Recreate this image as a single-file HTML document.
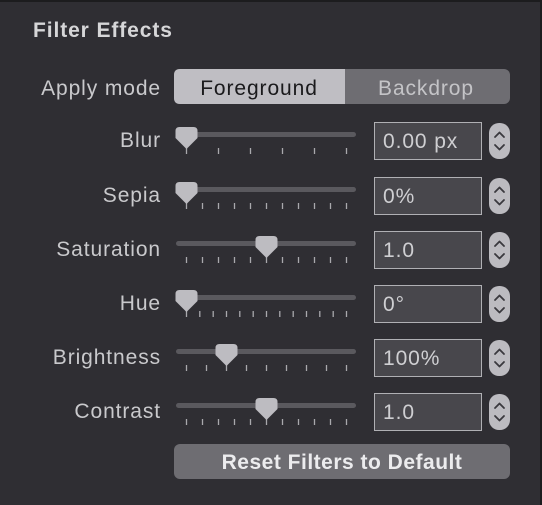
<!DOCTYPE html>
<html><head><meta charset="utf-8"><style>
html,body{margin:0;padding:0;background:#2f2e33;}
body{width:542px;height:505px;overflow:hidden;position:relative;font-family:"Liberation Sans",sans-serif;}
text{letter-spacing:0.9px;}
</style></head><body>
<svg width="542" height="505" xmlns="http://www.w3.org/2000/svg" style="position:absolute;left:0;top:0" font-family="Liberation Sans, sans-serif">
<rect x="0" y="0" width="542" height="505" fill="#2f2e33"/>
<rect x="0" y="0" width="542" height="2" fill="#1c1c1e"/>
<rect x="540" y="0" width="2" height="505" fill="#1c1c1e"/>
<text x="33" y="37" font-size="21" font-weight="bold" fill="#d6d6d8">Filter Effects</text>
<text x="161" y="95" font-size="21" fill="#c9c9cc" text-anchor="end">Apply mode</text>
<rect x="174" y="69" width="336" height="35" rx="6" fill="#6e6d72"/>
<path d="M180,69 H345 V104 H180 Q174,104 174,98 V75 Q174,69 180,69 Z" fill="#bfbec3"/>
<text x="259" y="95" font-size="21" fill="#1a1a1c" text-anchor="middle">Foreground</text>
<text x="426" y="95" font-size="21" fill="#c4c4c7" text-anchor="middle">Backdrop</text>

<g font-size="21">
<text x="161" y="147" fill="#c9c9cc" text-anchor="end">Blur</text>
<text x="161" y="202" fill="#c9c9cc" text-anchor="end">Sepia</text>
<text x="161" y="256" fill="#c9c9cc" text-anchor="end">Saturation</text>
<text x="161" y="310" fill="#c9c9cc" text-anchor="end">Hue</text>
<text x="161" y="364" fill="#c9c9cc" text-anchor="end">Brightness</text>
<text x="161" y="418" fill="#c9c9cc" text-anchor="end">Contrast</text>
</g>

<g fill="#5a595e">
<rect x="176" y="132" width="180" height="5" rx="2.5"/>
<rect x="176" y="187" width="180" height="5" rx="2.5"/>
<rect x="176" y="241" width="180" height="5" rx="2.5"/>
<rect x="176" y="295" width="180" height="5" rx="2.5"/>
<rect x="176" y="349" width="180" height="5" rx="2.5"/>
<rect x="176" y="403" width="180" height="5" rx="2.5"/>
</g>

<g stroke="#a9a9ad" stroke-width="1.3">
<path d="M186.5,148v6M218.5,148v6M250.5,148v6M282.5,148v6M314.5,148v6M346.5,148v6"/>
<path d="M186.5,203v6M202.5,203v6M218.5,203v6M234.5,203v6M250.5,203v6M266.5,203v6M282.5,203v6M298.5,203v6M314.5,203v6M330.5,203v6M346.5,203v6"/>
<path d="M186.5,257v6M202.5,257v6M218.5,257v6M234.5,257v6M250.5,257v6M266.5,257v6M282.5,257v6M298.5,257v6M314.5,257v6M330.5,257v6M346.5,257v6"/>
<path d="M186.5,311v6M199.8,311v6M213.2,311v6M226.5,311v6M239.8,311v6M253.2,311v6M266.5,311v6M279.8,311v6M293.2,311v6M306.5,311v6M319.8,311v6M333.2,311v6M346.5,311v6"/>
<path d="M186.5,365v6M206.5,365v6M226.5,365v6M246.5,365v6M266.5,365v6M286.5,365v6M306.5,365v6M326.5,365v6M346.5,365v6"/>
<path d="M186.5,419v6M202.5,419v6M218.5,419v6M234.5,419v6M250.5,419v6M266.5,419v6M282.5,419v6M298.5,419v6M314.5,419v6M330.5,419v6M346.5,419v6"/>
</g>

<g fill="#bdbcc1">
<path d="M175.5,131 q0,-4 4,-4 h14 q4,0 4,4 v7 l-11,11 l-11,-11 z"/>
<path d="M175.5,186 q0,-4 4,-4 h14 q4,0 4,4 v7 l-11,11 l-11,-11 z"/>
<path d="M255.5,240 q0,-4 4,-4 h14 q4,0 4,4 v7 l-11,11 l-11,-11 z"/>
<path d="M175.5,294 q0,-4 4,-4 h14 q4,0 4,4 v7 l-11,11 l-11,-11 z"/>
<path d="M215.5,348 q0,-4 4,-4 h14 q4,0 4,4 v7 l-11,11 l-11,-11 z"/>
<path d="M255.5,402 q0,-4 4,-4 h14 q4,0 4,4 v7 l-11,11 l-11,-11 z"/>
</g>

<g fill="#48474c" stroke="#b0b0b4" stroke-width="1">
<rect x="374.5" y="122.5" width="107" height="37"/>
<rect x="374.5" y="177.5" width="107" height="37"/>
<rect x="374.5" y="231.5" width="107" height="37"/>
<rect x="374.5" y="285.5" width="107" height="37"/>
<rect x="374.5" y="339.5" width="107" height="37"/>
<rect x="374.5" y="393.5" width="107" height="37"/>
</g>
<g font-size="21" fill="#cfcfd2">
<text x="383" y="148">0.00 px</text>
<text x="383" y="203">0%</text>
<text x="383" y="257">1.0</text>
<text x="383" y="311">0°</text>
<text x="383" y="365">100%</text>
<text x="383" y="419">1.0</text>
</g>

<g fill="#bcbbc0">
<rect x="489" y="123" width="21" height="36" rx="10"/>
<rect x="489" y="178" width="21" height="36" rx="10"/>
<rect x="489" y="232" width="21" height="36" rx="10"/>
<rect x="489" y="286" width="21" height="36" rx="10"/>
<rect x="489" y="340" width="21" height="36" rx="10"/>
<rect x="489" y="394" width="21" height="36" rx="10"/>
</g>
<g fill="none" stroke="#3a393e" stroke-width="1.8" stroke-linecap="round" stroke-linejoin="round">
<path d="M495,137 l4.5,-4.5 l4.5,4.5 M495,145 l4.5,4.5 l4.5,-4.5"/>
<path d="M495,192 l4.5,-4.5 l4.5,4.5 M495,200 l4.5,4.5 l4.5,-4.5"/>
<path d="M495,246 l4.5,-4.5 l4.5,4.5 M495,254 l4.5,4.5 l4.5,-4.5"/>
<path d="M495,300 l4.5,-4.5 l4.5,4.5 M495,308 l4.5,4.5 l4.5,-4.5"/>
<path d="M495,354 l4.5,-4.5 l4.5,4.5 M495,362 l4.5,4.5 l4.5,-4.5"/>
<path d="M495,408 l4.5,-4.5 l4.5,4.5 M495,416 l4.5,4.5 l4.5,-4.5"/>
</g>

<rect x="174" y="444" width="336" height="35" rx="6" fill="#6e6d72"/>
<text x="342" y="469" font-size="21" font-weight="bold" fill="#ececee" text-anchor="middle" style="letter-spacing:0.5px">Reset Filters to Default</text>
</svg>
</body></html>
